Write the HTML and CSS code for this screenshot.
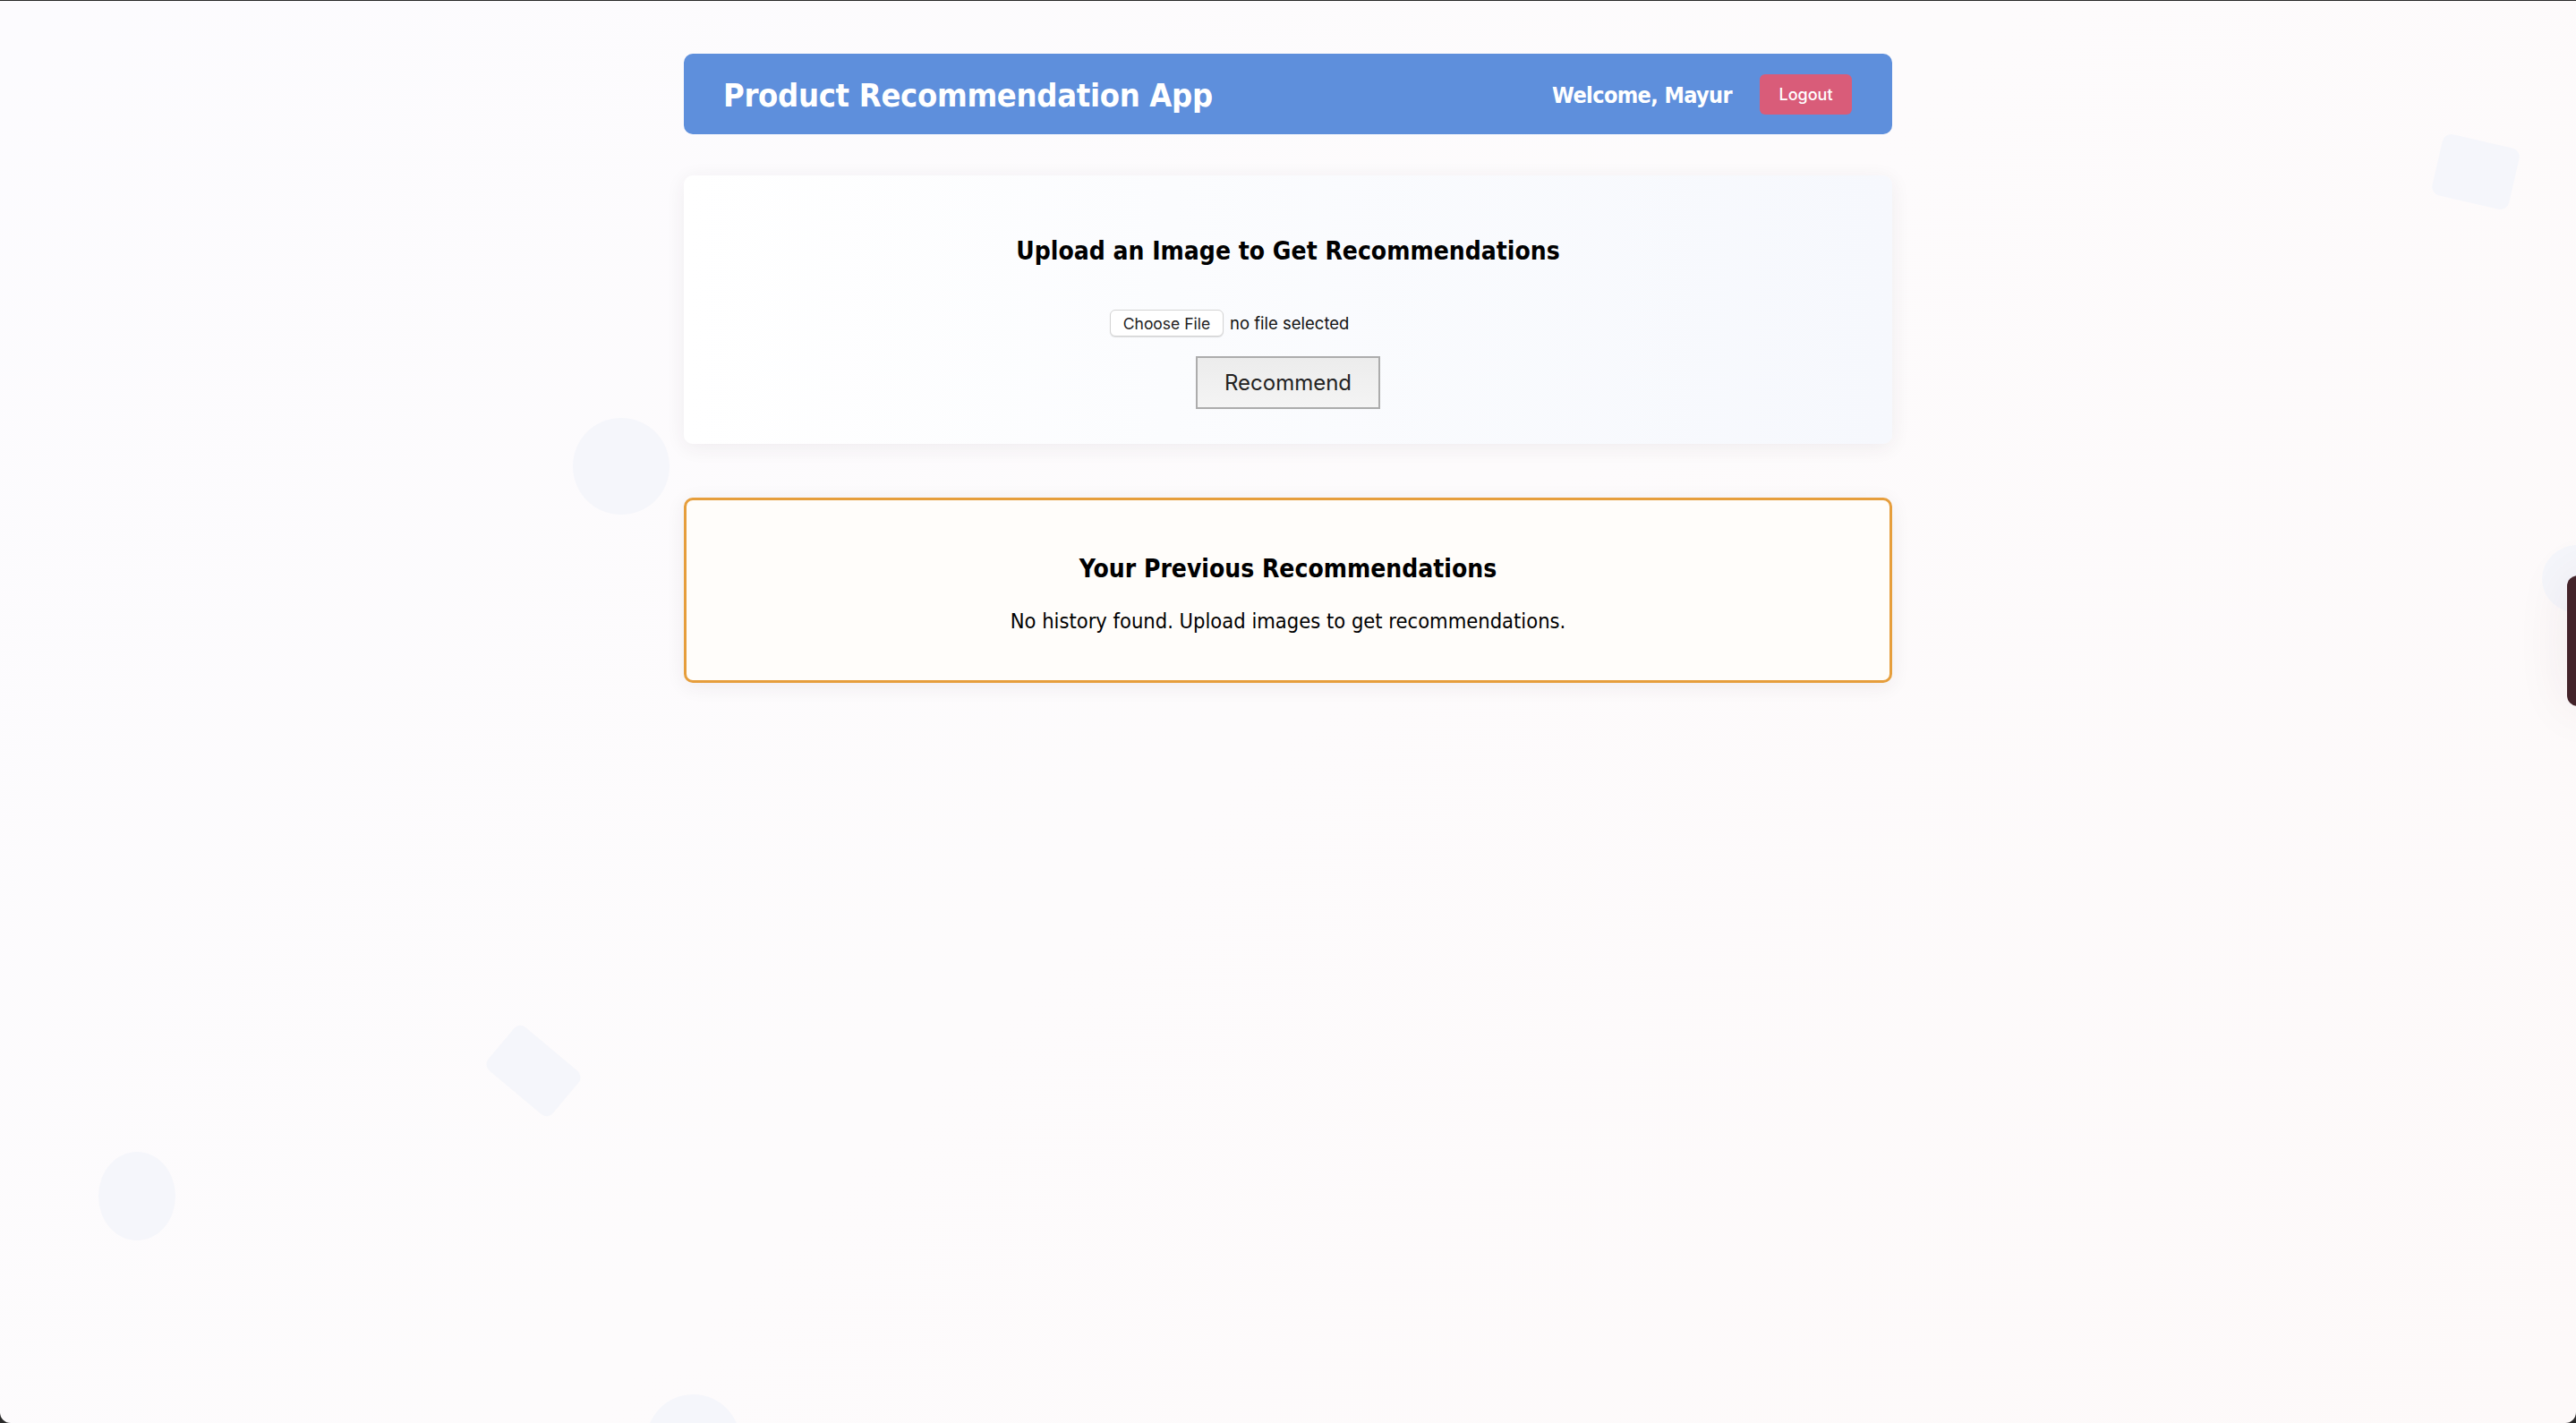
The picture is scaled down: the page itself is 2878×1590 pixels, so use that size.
FILE: index.html
```html
<!DOCTYPE html>
<html lang="en">
<head>
<meta charset="utf-8">
<title>Product Recommendation App</title>
<link rel="stylesheet" href="styles.css">
</head>
<body>
<div class="page">
  <div class="shape shape-circle-a"></div>
  <div class="shape shape-rect-tr"></div>
  <div class="shape shape-diamond"></div>
  <div class="shape shape-ellipse"></div>
  <div class="shape shape-circle-b"></div>
  <div class="shape shape-circle-r"></div>
  <div class="side-widget"></div>

  <div class="container">
    <header class="app-header">
      <h1 class="app-title">Product Recommendation App</h1>
      <div class="user-area">
        <span class="welcome">Welcome, Mayur</span>
        <button class="logout-btn">Logout</button>
      </div>
    </header>

    <section class="card upload-card">
      <h2 class="card-title">Upload an Image to Get Recommendations</h2>
      <div class="file-row">
        <label class="file-input">
          <span class="file-btn">Choose File</span>
          <span class="file-name">no file selected</span>
        </label>
      </div>
      <button class="recommend-btn">Recommend</button>
    </section>

    <section class="card history-card">
      <h2 class="card-title">Your Previous Recommendations</h2>
      <p class="empty-text">No history found. Upload images to get recommendations.</p>
    </section>
  </div>
</div>
</body>
</html>
```

FILE: styles.css
```css
html {
  background: #2a2a2a;
  margin: 0;
  padding: 0;
}

body {
  margin: 0;
  padding-top: 1px;
  font-family: "DejaVu Sans", Verdana, sans-serif;
  color: #000;
}

.page {
  position: relative;
  min-height: 1589px;
  overflow: hidden;
  background: linear-gradient(135deg, #fcfbfe 0%, #fdfbfc 50%, #fdf9f9 100%);
  border-bottom-left-radius: 12px;
  border-bottom-right-radius: 12px;
}

.container {
  position: relative;
  z-index: 1;
  width: 1350px;
  margin: 59px auto 0;
}

/* header */
.app-header {
  height: 90px;
  box-sizing: border-box;
  display: flex;
  align-items: center;
  justify-content: space-between;
  padding: 0 45px 0 44px;
  background: #5e8fdc;
  border-radius: 10px;
  color: #fff;
}

.app-title {
  margin: 3px 0 0;
  font-family: "DejaVu Sans Condensed", "DejaVu Sans", sans-serif;
  font-stretch: condensed;
  font-weight: bold;
  font-size: 36px;
  line-height: 44px;
  letter-spacing: -0.3px;
}

.user-area {
  display: flex;
  align-items: center;
  gap: 31px;
}

.welcome {
  padding-top: 3px;
  font-family: "DejaVu Sans Condensed", "DejaVu Sans", sans-serif;
  font-stretch: condensed;
  font-weight: bold;
  font-size: 25px;
  letter-spacing: -0.6px;
}

.logout-btn {
  width: 103px;
  height: 45px;
  border: none;
  border-radius: 6px;
  background: #d95c79;
  color: #fff;
  font-family: Inter, "Liberation Sans", sans-serif;
  font-weight: 500;
  font-size: 18px;
  padding: 0;
}

/* cards */
.card {
  box-sizing: border-box;
  border-radius: 10px;
  text-align: center;
  box-shadow: 0 4px 22px rgba(60, 40, 60, 0.07);
}

.upload-card {
  margin-top: 46px;
  height: 300px;
  padding: 68px 40px 39px;
  background: linear-gradient(90deg, #ffffff 0%, #fbfcfe 40%, #f6f8fd 100%);
  display: flex;
  flex-direction: column;
  align-items: center;
}

.card-title {
  margin: 0;
  font-family: "DejaVu Sans Condensed", "DejaVu Sans", sans-serif;
  font-stretch: condensed;
  font-weight: bold;
  font-size: 28px;
  line-height: 34px;
  letter-spacing: 0;
}

.file-row {
  margin-top: 48px;
  display: flex;
  justify-content: center;
}

.file-input {
  width: 398px;
  height: 30px;
  display: flex;
  align-items: center;
  gap: 7px;
}

.file-btn {
  box-sizing: border-box;
  width: 127px;
  height: 30px;
  display: flex;
  align-items: center;
  justify-content: center;
  background: #fff;
  border: 1px solid #d4d4d4;
  border-radius: 6px;
  box-shadow: 0 1px 1px rgba(0, 0, 0, 0.12);
  font-family: Inter, "Liberation Sans", sans-serif;
  font-size: 17.5px;
  color: #222;
}

.file-name {
  font-family: Inter, "Liberation Sans", sans-serif;
  font-size: 18.5px;
  color: #111;
}

.recommend-btn {
  margin-top: 22px;
  box-sizing: border-box;
  width: 206px;
  height: 59px;
  background: linear-gradient(180deg, #ececec 0%, #f4f4f4 100%);
  border: 2px solid #acacac;
  border-radius: 0;
  font-family: Inter, "Liberation Sans", sans-serif;
  font-size: 24px;
  color: #222;
  padding: 0;
}

.history-card {
  margin-top: 60px;
  height: 207px;
  border: 3px solid #e69e3c;
  background: #fffdfa;
  padding: 60px 40px 0;
}

.empty-text {
  margin: 27px 0 0;
  font-family: "DejaVu Sans Condensed", "DejaVu Sans", sans-serif;
  font-stretch: condensed;
  font-size: 23.5px;
  line-height: 28px;
  letter-spacing: 0;
}

/* decorative background shapes */
.shape {
  position: absolute;
  background: #f5f6fb;
  z-index: 0;
}

.shape-circle-a {
  left: 640px;
  top: 466px;
  width: 108px;
  height: 108px;
  border-radius: 50%;
}

.shape-rect-tr {
  left: 2722px;
  top: 156px;
  width: 88px;
  height: 70px;
  border-radius: 10px;
  transform: rotate(13deg);
}

.shape-diamond {
  left: 549px;
  top: 1164px;
  width: 94px;
  height: 63px;
  border-radius: 9px;
  transform: rotate(40deg);
}

.shape-ellipse {
  left: 110px;
  top: 1286px;
  width: 86px;
  height: 99px;
  border-radius: 50%;
}

.shape-circle-b {
  left: 722px;
  top: 1557px;
  width: 105px;
  height: 105px;
  border-radius: 50%;
}

.shape-circle-r {
  left: 2840px;
  top: 608px;
  width: 80px;
  height: 76px;
  border-radius: 50%;
}

.side-widget {
  position: absolute;
  z-index: 2;
  left: 2868px;
  top: 642px;
  width: 60px;
  height: 146px;
  border-radius: 12px;
  background: #43232a;
  box-shadow: 0 0 60px rgba(90, 40, 50, 0.08);
}
```
